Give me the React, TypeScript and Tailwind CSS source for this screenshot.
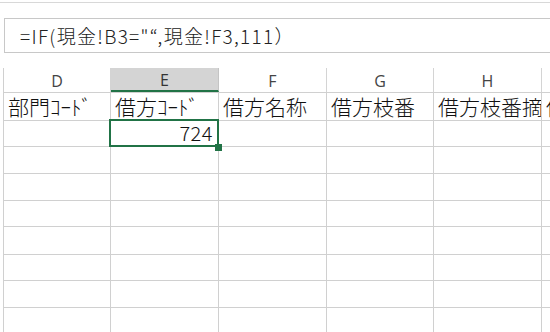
import React from "react";

const cols = [
  { id: "D", w: 107, label: "部門ｺｰﾄﾞ" },
  { id: "E", w: 108, label: "借方ｺｰﾄﾞ" },
  { id: "F", w: 108, label: "借方名称" },
  { id: "G", w: 107, label: "借方枝番" },
  { id: "H", w: 108, label: "借方枝番摘要" },
  { id: "I", w: 108, label: "借方補助" },
];

const rowHeights = [26, 27, 27, 26, 28, 26, 27, 27];

const jp = { fontFamily: '"MS PGothic", "Noto Sans CJK JP", sans-serif' };

export default function App() {
  return (
    <div className="w-[550px] h-[332px] overflow-hidden bg-white relative">
      <div className="mt-[2px] border-t border-[#d8d8d8]" />
      <div className="mt-[15px] ml-[4px] w-[700px] h-[35px] border-t border-b border-l border-[#c8c8c8] flex items-center pl-[15px]">
        <span className="text-[19px] font-light tracking-[1.3px] text-[#222] whitespace-nowrap leading-none" style={jp}>
          =IF(現金!B3="“,現金!F3,111）
        </span>
      </div>
      <div className="mt-[15px] ml-[3px] w-[700px]">
        {/* header */}
        <div className="flex h-[25px] border-l border-b border-[#d0d0d0]">
          {cols.map((c) => (
            <div
              key={c.id}
              className={
                c.id === "E"
                  ? "shrink-0 flex items-center justify-center pt-[2px] border-r border-[#c4c4c4] bg-[#d4d4d4] border-b-2 border-b-[#217346] text-[16px] text-[#333]"
                  : "shrink-0 flex items-center justify-center pt-[2px] border-r border-[#d4d4d4] text-[16px] text-[#444]"
              }
              style={{ width: c.w, fontFamily: '"Open Sans", "Noto Sans", sans-serif' }}
            >
              {c.id}
            </div>
          ))}
        </div>
        {/* row 1 */}
        <div className="flex h-[28px] border-l border-b border-[#d0d0d0]">
          {cols.map((c) => (
            <div
              key={c.id}
              className="shrink-0 overflow-hidden whitespace-nowrap border-r border-[#d0d0d0] flex items-center pl-[4px] text-[21px] font-light text-[#111] leading-none"
              style={{ width: c.w, ...jp }}
            >
              {c.label}
            </div>
          ))}
        </div>
        {rowHeights.map((h, ri) => (
          <div key={ri} className="flex border-l border-b border-[#d0d0d0]" style={{ height: h }}>
            {cols.map((c) => (
              <div
                key={c.id}
                className={c.id === "E" && ri === 0 ? "shrink-0 border-r border-[#d0d0d0] relative z-10" : "shrink-0 border-r border-[#d0d0d0]"}
                style={{ width: c.w }}
              >
                {ri === 0 && c.id === "E" && (
                  <>
                    <div
                      className="absolute left-[-2px] top-[-2px] right-[-1px] bottom-[-1px] border-2 border-[#217346] flex items-center justify-end pr-[4px] text-[20px] font-light tracking-[0.5px] text-[#111] leading-none"
                      style={jp}
                    >
                      724
                    </div>
                    <div className="absolute right-[-4px] bottom-[-5px] w-[7px] h-[7px] bg-[#217346] z-20" />
                  </>
                )}
              </div>
            ))}
          </div>
        ))}
      </div>
    </div>
  );
}
